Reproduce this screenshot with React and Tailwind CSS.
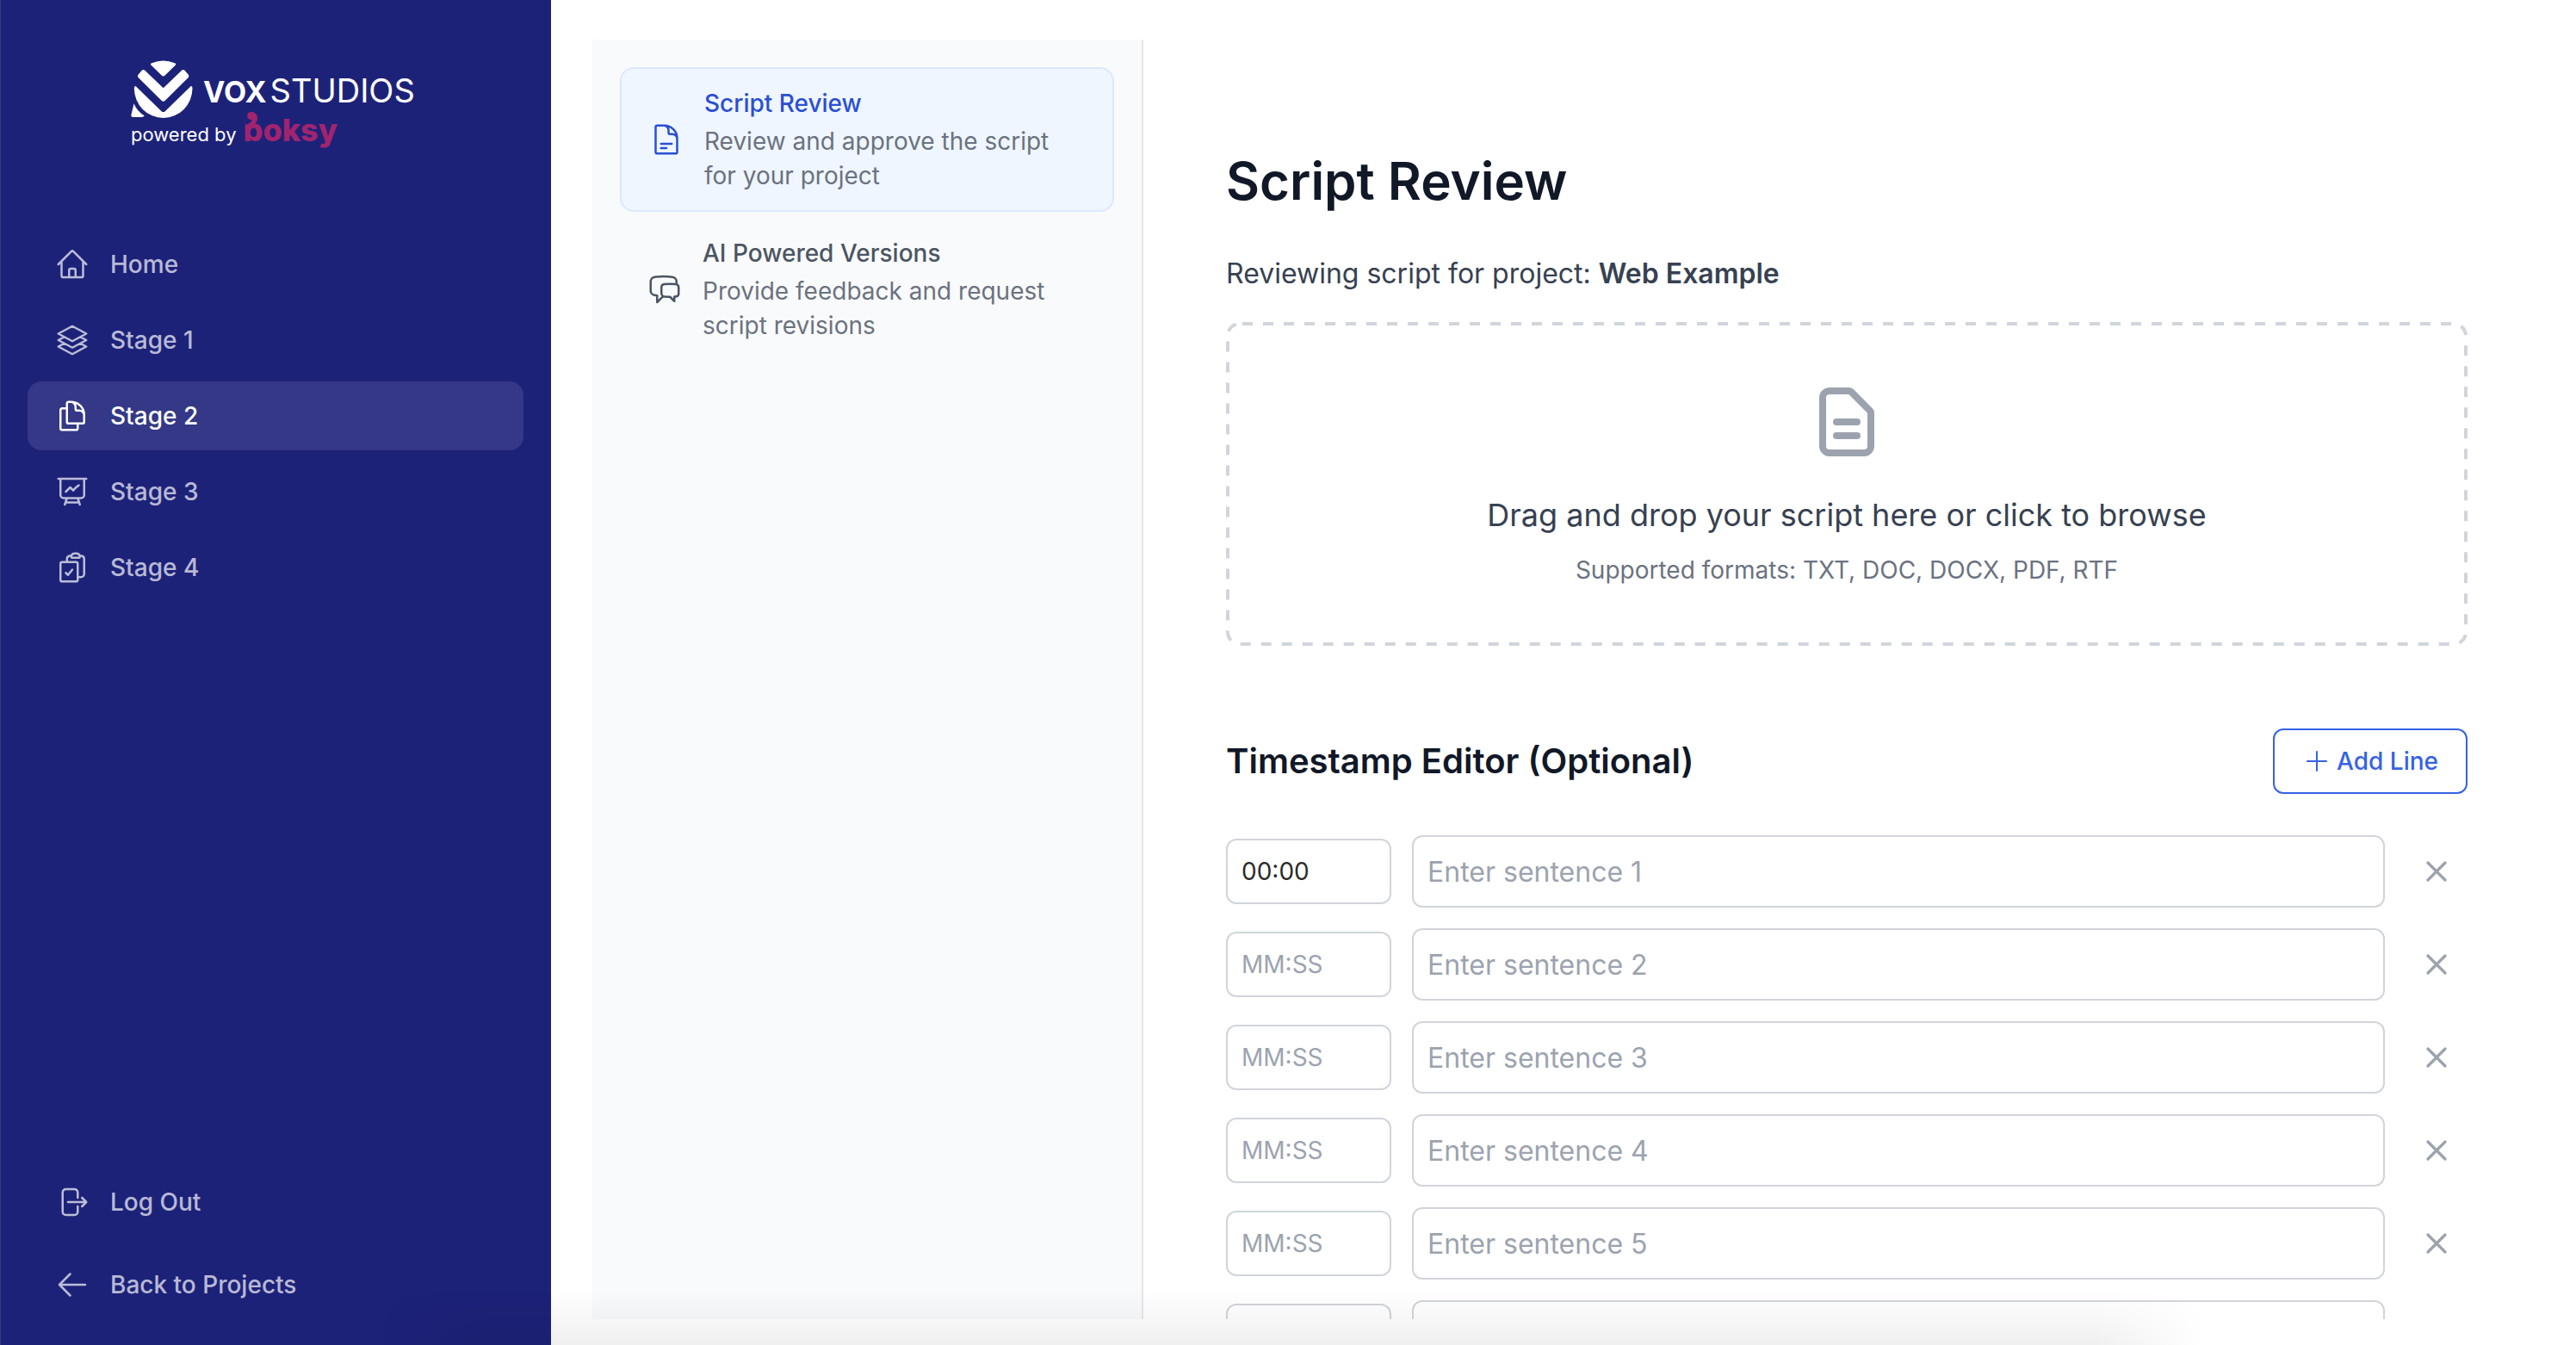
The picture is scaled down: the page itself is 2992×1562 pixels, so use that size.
import {
  HiOutlineHome,
  HiOutlineSquare3Stack3D,
  HiOutlineDocumentDuplicate,
  HiOutlinePresentationChartLine,
  HiOutlineClipboardDocumentCheck,
  HiOutlineArrowRightOnRectangle,
  HiOutlineArrowLeft,
  HiOutlineDocumentText,
  HiOutlineChatBubbleLeftRight,
  HiOutlineXMark,
} from "react-icons/hi2";
import { HiOutlineDocumentText as UploadDocument } from "react-icons/hi";

const stages = [
  { label: "Home", icon: HiOutlineHome },
  { label: "Stage 1", icon: HiOutlineSquare3Stack3D },
  { label: "Stage 2", icon: HiOutlineDocumentDuplicate, active: true },
  { label: "Stage 3", icon: HiOutlinePresentationChartLine },
  { label: "Stage 4", icon: HiOutlineClipboardDocumentCheck },
];

const footerLinks = [
  { label: "Log Out", icon: HiOutlineArrowRightOnRectangle },
  { label: "Back to Projects", icon: HiOutlineArrowLeft },
];

const steps = [
  {
    title: "Script Review",
    text: "Review and approve the script for your project",
    icon: HiOutlineDocumentText,
    active: true,
  },
  {
    title: "AI Powered Versions",
    text: "Provide feedback and request script revisions",
    icon: HiOutlineChatBubbleLeftRight,
  },
];

const lines = [1, 2, 3, 4, 5, 6];

function LogoMark() {
  return (
    <svg viewBox="66 58 214 206" className="h-[69px] w-[72px] shrink-0" fill="currentColor" aria-hidden="true">
      <path d="M137 76Q131 71 138 68Q178 51 218 68Q224 71 219 76L184 110Q178 116 172 110Z" />
      <path d="M91 118Q87 113 91 108L103 94Q109 87 115 94L178 154L241 94Q247 87 253 94L265 108Q269 113 265 118L185 197Q178 204 171 197Z" />
      <path d="M77 155Q78 143 86 151L171 234Q178 241 185 234L270 151Q278 143 279 155A101 103 0 0 1 77 155Z" />
      <path d="M76 208Q88 236 112 250Q112 254 104 255H72Q65 255 67 246Z" />
    </svg>
  );
}

function Brand() {
  return (
    <div className="flex flex-col pl-[152px] text-white">
      <div className="flex items-center gap-3">
        <LogoMark />
        <div className="flex items-baseline gap-1 pt-0.5 leading-10">
          <span className="text-[34px] font-bold">VOX</span>
          <span className="text-[38px] font-normal">STUDIOS</span>
        </div>
      </div>
      <div className="-mt-1 flex h-8 items-baseline gap-2 leading-8">
        <span className="text-[22px]">powered by</span>
        <span className="relative text-[36px] font-extrabold text-[#a0246f]">
          boksy
          <svg viewBox="460 236 45 54" className="absolute -top-1.5 left-0.5 h-[18px] w-[15px]" aria-hidden="true">
            <path d="M460 246H492V283H460Z" fill="#1d2279" />
            <path
              d="M478 238C493 238 502 248 502 260C502 274 494 284 482 290H462V284C474 280 482 274 483 266A14 14 0 1 1 478 238Z"
              fill="currentColor"
            />
          </svg>
        </span>
      </div>
    </div>
  );
}

function NavLink({ item }) {
  const Icon = item.icon;
  return (
    <a
      href="#"
      aria-current={item.active ? "page" : undefined}
      className={`flex h-20 items-center gap-6 rounded-2xl px-8 text-[28px] leading-10 font-medium ${
        item.active ? "bg-white/10 text-white" : "text-white/70"
      }`}
    >
      <Icon className="size-10 shrink-0" aria-hidden="true" />
      {item.label}
    </a>
  );
}

function Step({ item }) {
  const Icon = item.icon;
  return (
    <a
      href="#"
      className={`flex items-center gap-6 rounded-2xl px-8 py-5 text-[28px] leading-10 ${
        item.active ? "border-2 border-[#dbe8fd] bg-[#eff6ff] text-[#2b4fd4]" : "text-[#4b5563]"
      }`}
    >
      <Icon className="size-10 shrink-0" aria-hidden="true" />
      <span className="flex flex-col gap-1">
        <span className="font-medium">{item.title}</span>
        <span className="text-[#6b7280]">{item.text}</span>
      </span>
    </a>
  );
}

function DashedOutline() {
  return (
    <svg className="pointer-events-none absolute inset-0 size-full p-0.5 overflow-visible" aria-hidden="true">
      <rect
        width="100%"
        height="100%"
        rx="14"
        fill="none"
        stroke="#d1d5db"
        strokeWidth="4"
        strokeDasharray="12 12"
        strokeDashoffset="-3"
      />
    </svg>
  );
}

function TimestampRow({ n }) {
  return (
    <li className="flex items-center gap-6">
      <input
        aria-label={`Timestamp ${n}`}
        placeholder="MM:SS"
        defaultValue={n === 1 ? "00:00" : ""}
        className="h-[76px] w-48 shrink-0 rounded-xl border-2 border-[#d1d5db] bg-white px-4 text-[28px] text-[#2b2b2b] placeholder:text-[#9ca3af]"
      />
      <input
        aria-label={`Sentence ${n}`}
        placeholder={`Enter sentence ${n}`}
        className="h-[84px] min-w-0 flex-1 rounded-xl border-2 border-[#d1d5db] bg-white px-4 text-[32px] text-[#2b2b2b] placeholder:text-[#9ca3af]"
      />
      <button type="button" aria-label={`Remove line ${n}`} className="p-4 text-[#9ca3af]">
        <HiOutlineXMark className="size-10" strokeWidth={2} aria-hidden="true" />
      </button>
    </li>
  );
}

export default function App() {
  return (
    <div className="relative flex h-screen overflow-hidden bg-white font-['Inter',sans-serif]">
      <aside className="flex w-[640px] shrink-0 flex-col bg-[#1d2279] pt-[70px] pb-[30px] inset-shadow-[1px_0_0_#343a85]">
        <Brand />
        <nav className="mt-25 flex flex-col gap-2 px-8">
          {stages.map((item) => (
            <NavLink key={item.label} item={item} />
          ))}
        </nav>
        <nav className="mt-auto flex flex-col gap-4 px-8">
          {footerLinks.map((item) => (
            <NavLink key={item.label} item={item} />
          ))}
        </nav>
      </aside>

      <div className="flex min-w-0 flex-1 pt-[46px] pr-[30px] pb-[30px] pl-12">
        <nav className="flex w-[640px] shrink-0 flex-col gap-2 border-r-2 border-[#e5e7eb] bg-[#f9fafb] p-8">
          {steps.map((item) => (
            <Step key={item.title} item={item} />
          ))}
        </nav>

        <main className="min-w-0 flex-1 overflow-hidden px-24 pt-32">
          <h1 className="text-[60px] leading-[72px] font-semibold text-[#111827]">Script Review</h1>
          <p className="mt-12 text-[32px] leading-[48px] text-[#374151]">
            Reviewing script for project: <strong className="font-semibold">Web Example</strong>
          </p>

          <button type="button" className="relative mt-8 flex w-full flex-col items-center rounded-2xl py-[68px]">
            <DashedOutline />
            <UploadDocument className="size-24 text-[#9ca3af]" aria-hidden="true" />
            <span className="mt-8 text-[36px] leading-[56px] text-[#374151]">
              Drag and drop your script here or click to browse
            </span>
            <span className="mt-4 text-[28px] leading-10 text-[#6b7280]">
              Supported formats: TXT, DOC, DOCX, PDF, RTF
            </span>
          </button>

          <div className="mt-24 flex items-center justify-between">
            <h2 className="text-[40px] leading-[56px] font-semibold text-[#111827]">Timestamp Editor (Optional)</h2>
            <button
              type="button"
              className="flex h-[76px] items-center gap-2 rounded-xl border-2 border-[#3562e6] px-8 text-[28px] font-medium text-[#3562e6]"
            >
              <svg viewBox="0 0 32 32" className="size-8" fill="none" stroke="currentColor" strokeWidth="2" strokeLinecap="round" aria-hidden="true">
                <path d="M17 5v22M6 16h22" />
              </svg>
              Add Line
            </button>
          </div>

          <ul className="mt-12 flex flex-col gap-6">
            {lines.map((n) => (
              <TimestampRow key={n} n={n} />
            ))}
          </ul>
        </main>
      </div>

      <div className="pointer-events-none absolute right-[430px] bottom-0 left-[440px] h-16 bg-linear-to-t from-black/6 to-transparent mask-x-from-94%" />
    </div>
  );
}
